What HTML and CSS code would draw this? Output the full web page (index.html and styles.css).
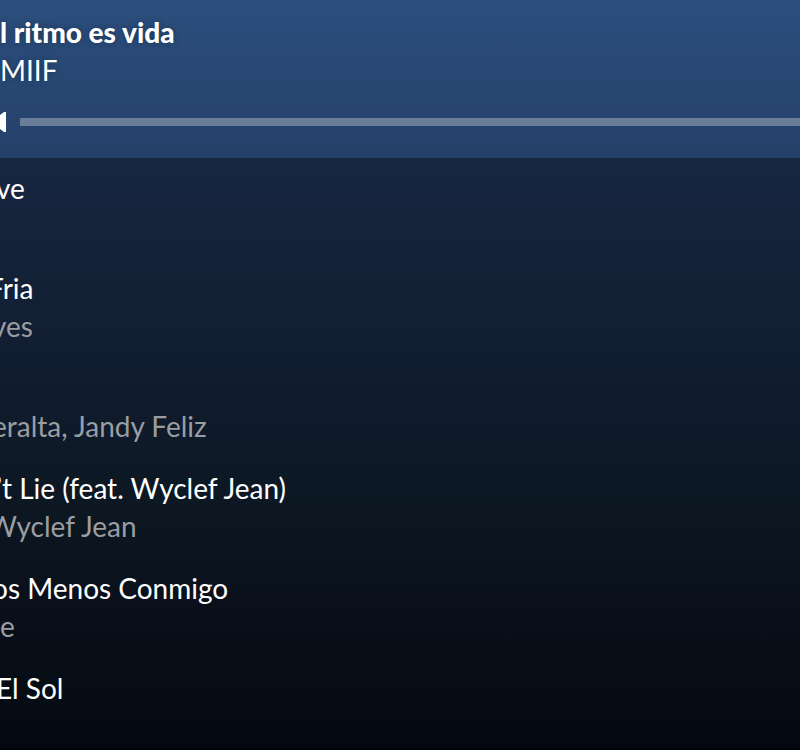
FILE: index.html
```
<!DOCTYPE html>
<html lang="es">

<head>
    <meta charset="UTF-8">
    <title>El ritmo es vida</title>
    <link rel="stylesheet" href="styles.css">
</head>

<body>
    <main class="player">
        <header class="now-playing">
            <h1>l ritmo es vida</h1>
            <p>MIIF</p>
            <div class="controls">
                <button class="play" aria-label="Play">
                    <svg width="6" height="20" viewBox="0 0 6 20"><path d="M0 3 L4 0 H6 V20 H4 L0 17 Z" fill="#fff"/></svg>
                </button>
                <input class="progress" type="range" min="0" max="100" value="0" aria-label="Progress">
            </div>
        </header>
        <ol class="tracks">
            <li>
                <h2 class="cut-small">ve</h2>
                <p>&nbsp;</p>
            </li>
            <li>
                <h2 class="cut-large">Fria</h2>
                <p class="cut">ves</p>
            </li>
            <li>
                <h2>&nbsp;</h2>
                <p class="cut">eralta, Jandy Feliz</p>
            </li>
            <li>
                <h2 class="cut-small">’t Lie (feat. Wyclef Jean)</h2>
                <p class="cut-large">Wyclef Jean</p>
            </li>
            <li>
                <h2 class="cut">os Menos Conmigo</h2>
                <p>e</p>
            </li>
            <li>
                <h2 class="cut-small">El Sol</h2>
                <p>&nbsp;</p>
            </li>
        </ol>
    </main>
</body>

</html>
```
FILE: styles.css
```
* {
    box-sizing: border-box;
}

body {
    margin: 0;
    background-color: #000;
    color: #fff;
    font-family: Lato, sans-serif;
    font-size: 28px;
    line-height: 38px;
}

h1,
h2,
p {
    margin: 0;
    font-size: 28px;
    font-weight: 400;
    white-space: nowrap;
}

.player {
    display: flex;
    flex-direction: column;
    height: 100vh;
    overflow: hidden;
    border-bottom: 2px solid #020308;
}

.now-playing {
    padding: 13px 0 26px;
    background: linear-gradient(#2b4e7d, #25416a);
    text-shadow: 0 0 6px rgba(0, 0, 0, 0.3);
}

.now-playing h1 {
    font-weight: 900;
}

/* text that runs in from the left edge */
.cut-small {
    margin-left: -4px;
}

.cut {
    margin-left: -8px;
}

.cut-large {
    margin-left: -12px;
}

.controls {
    display: flex;
    align-items: center;
    gap: 14px;
    height: 20px;
    margin-top: 23px;
}

.play {
    display: flex;
    padding: 0;
    border: 0;
    background: none;
}

.progress {
    appearance: none;
    flex: 1;
    height: 8px;
    margin: 0;
    background-color: #697d99;
}

.progress::-webkit-slider-thumb {
    appearance: none;
    width: 0;
    height: 0;
}

.tracks {
    flex: 1;
    min-height: 0;
    margin: 0;
    padding: 0;
    list-style: none;
    background: linear-gradient(#172740, #121f34 28%, #0c1722 60%, #090f1a 78%, #050c13 94%, #050810);
}

.tracks li {
    padding: 11px 0 13px;
}

.tracks p {
    color: #9a9da1;
}
```
